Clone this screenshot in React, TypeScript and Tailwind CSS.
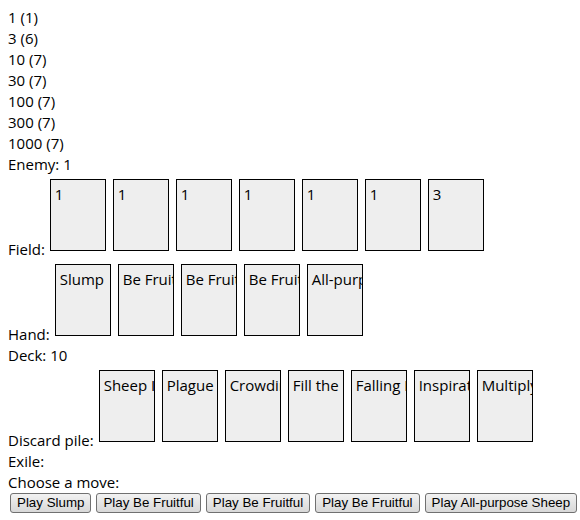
import React from "react";

const counts = [
  { value: 1, count: 1 },
  { value: 3, count: 6 },
  { value: 10, count: 7 },
  { value: 30, count: 7 },
  { value: 100, count: 7 },
  { value: 300, count: 7 },
  { value: 1000, count: 7 },
];

const field = ["1", "1", "1", "1", "1", "1", "3"];
const hand = ["Slump", "Be Fruitful", "Be Fruitful", "Be Fruitful", "All-purpose Sheep"];
const discard = [
  "Sheep Idol",
  "Plague",
  "Crowding",
  "Fill the Earth",
  "Falling Rocks",
  "Inspiration",
  "Multiply",
];

const Card: React.FC<{ name: string }> = ({ name }) => (
  <div className="h-[72px] w-[56px] shrink-0 overflow-hidden whitespace-nowrap border border-black bg-[#eeeeee] p-[4px] leading-[21px]">
    {name}
  </div>
);

const CardRow: React.FC<{ label: string; cards: string[] }> = ({ label, cards }) => (
  <div className="flex items-end">
    <span className="shrink-0 whitespace-nowrap leading-[21px]">{label}</span>
    <div className="ml-[5px] flex gap-[7px] pt-[4px] pb-[9px]">
      {cards.map((c, i) => (
        <Card key={i} name={c} />
      ))}
    </div>
  </div>
);

export default function App() {
  return (
    <div className="bg-white px-2 pt-[7px] font-['Open_Sans',sans-serif] text-[15px] leading-[21px] text-black">
      {counts.map((c) => (
        <div key={c.value}>
          {c.value} ({c.count})
        </div>
      ))}
      <div>Enemy: 1</div>
      <CardRow label="Field:" cards={field} />
      <CardRow label="Hand:" cards={hand} />
      <div>Deck: 10</div>
      <CardRow label="Discard pile:" cards={discard} />
      <div>Exile:</div>
      <div>Choose a move:</div>
      <div className="flex gap-[5px] pl-[2px]">
        {hand.map((c, i) => (
          <button
            key={i}
            className="h-[20px] shrink-0 whitespace-nowrap rounded-[3px] border border-[#707070] bg-gradient-to-b from-[#f2f2f2] to-[#d8d8d8] px-[6px] font-['Liberation_Sans',Arial,sans-serif] text-[13.333px] leading-[16px] text-black"
          >
            Play {c}
          </button>
        ))}
      </div>
    </div>
  );
}
